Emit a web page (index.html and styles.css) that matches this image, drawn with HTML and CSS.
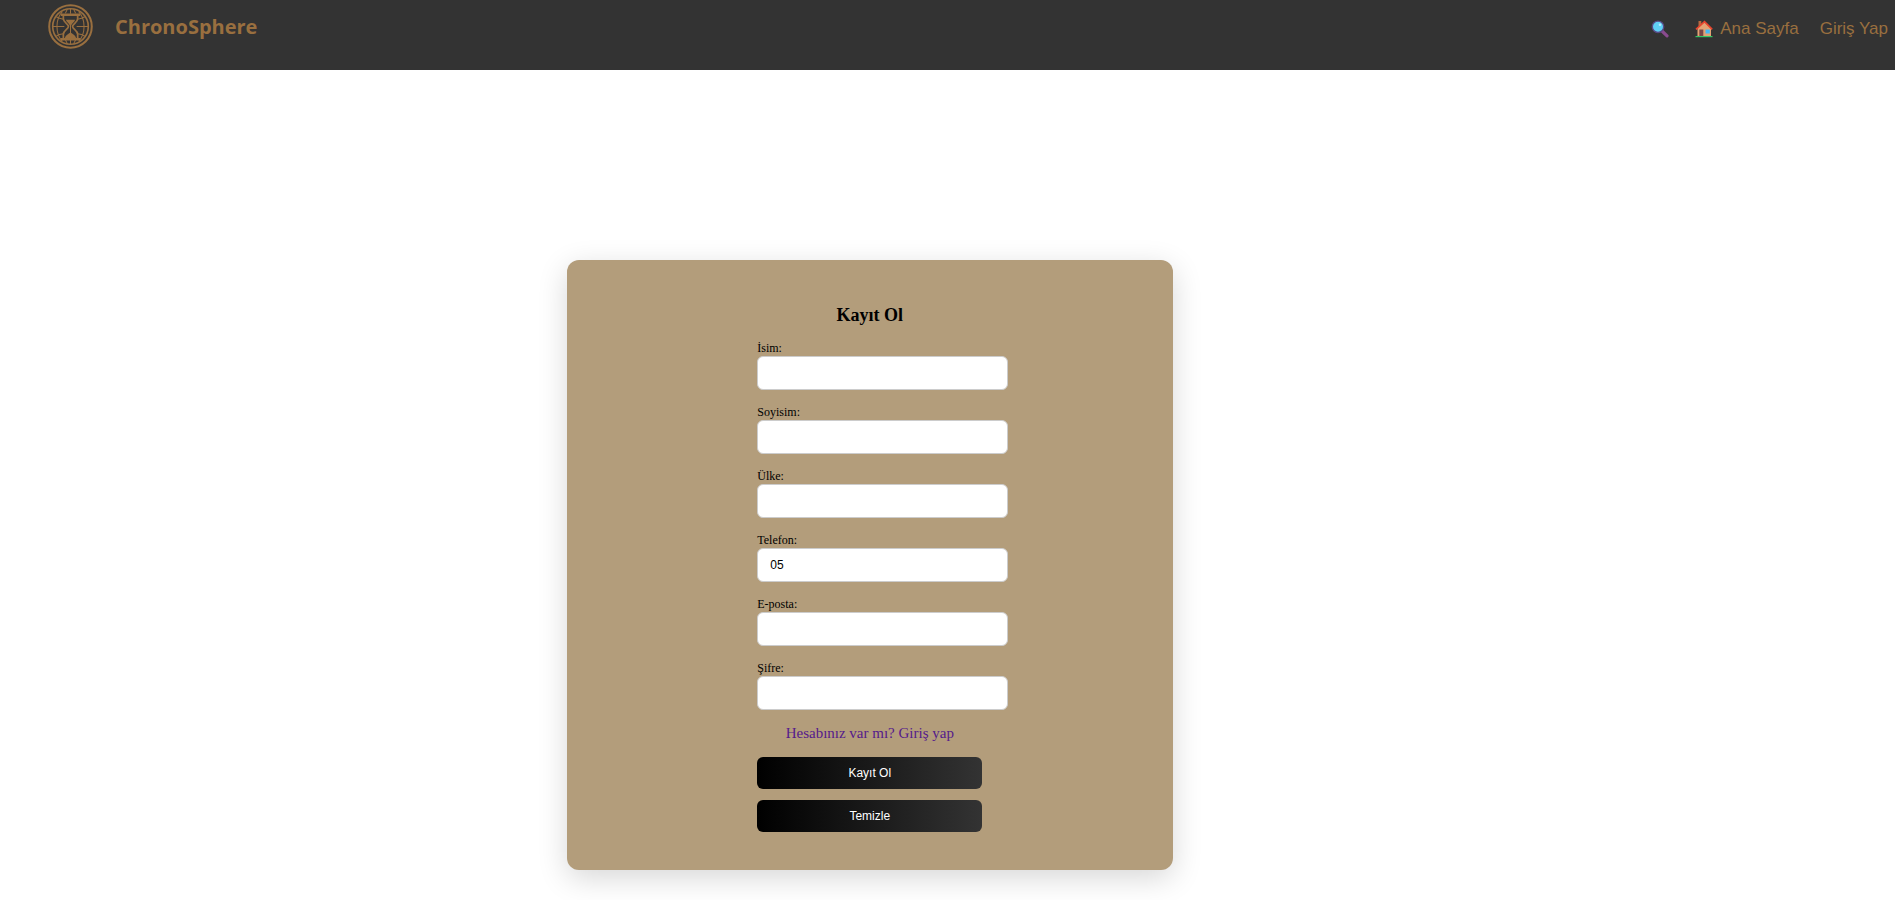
FILE: index.html
```html
<!DOCTYPE html>
<html lang="tr">
<head>
<meta charset="utf-8">
<meta name="viewport" content="width=device-width, initial-scale=1">
<title>ChronoSphere - Kayıt Ol</title>
<link rel="stylesheet" href="styles.css">
</head>
<body>
<header class="navbar">
  <a class="brand" href="#">
    <svg class="brand-logo" viewBox="0 0 44 44" fill="none" stroke="currentColor" aria-hidden="true">
      <circle cx="22" cy="22" r="20.800" stroke-width="2"/>
      <circle cx="22" cy="22" r="17.400" stroke-width="1.600"/>
      <path d="M4.500 22H16M28 22h11.500M8 12.500q3 1.800 7 2.300M36 12.500q-3 1.800-7 2.300M8 31.500q3-1.800 7-2.300M36 31.500q-3-1.800-7-2.300M14 7.500C7 15 7 29 14 36.500M30 7.500c7 7.500 7 21.500 0 29M22 4.500v5M22 35v4.500M17 9l2-4M27 9l-2-4M17 35l2 4M27 35l-2 4"/>
      <path d="M12.500 10.500h19M12.500 34.500h19" stroke-width="2.400"/>
      <path d="M15 11v3.500c0 3.500 5 5 5 7.500s-5 4-5 7.500V34M29 11v3.500c0 3.500-5 5-5 7.500s5 4 5 7.500V34" stroke-width="1.700"/>
      <path d="M17.500 15.500h9c-.5 2.500-3.500 3.500-4 6h-1c-.5-2.500-3.500-3.500-4-6zM16.500 33.500c.5-3.500 3.500-4 5.500-6 2 2 5 2.500 5.500 6z" fill="currentColor" stroke="none"/>
      <path d="M22 20v9"/>
    </svg>
    <span class="brand-name">ChronoSphere</span>
  </a>
  <nav class="nav-links">
    <a class="nav-link" href="#" aria-label="Ara">
      <svg class="nav-icon" viewBox="0 0 18 18" aria-hidden="true">
        <path d="M11 11l5 4.800" stroke="#8a4b8f" stroke-width="3.200" stroke-linecap="round"/>
        <circle cx="7" cy="6.800" r="5.700" fill="#5fd0f5" stroke="#594a86" stroke-width="1.400"/>
        <circle cx="9" cy="4.800" r="1.300" fill="#b5ecff"/>
      </svg>
    </a>
    <a class="nav-link" href="#">
      <svg class="nav-icon" viewBox="0 0 18 18" aria-hidden="true">
        <path d="M3.500 1h2.800v5H3.500z" fill="#b9683f"/>
        <path d="M2.500 8L9.500 2l6.500 6v8H2.500z" fill="#e3a374"/>
        <path d="M1 9.300L9.500 1.700l7.700 7.600" fill="none" stroke="#e8452f" stroke-width="1.700"/>
        <path d="M4.300 9.500h4v6.500h-4z" fill="#7a4545"/>
        <path d="M10.500 9.500h4.300v4h-4.300z" fill="#45b8f5"/>
        <path d="M.5 16h17v1.200H.5z" fill="#35c465"/>
      </svg>
      <span>Ana Sayfa</span>
    </a>
    <a class="nav-link" href="#">Giriş Yap</a>
  </nav>
</header>
<main>
  <section class="card">
    <form class="signup">
      <h1 class="title">Kayıt Ol</h1>
      <div class="field"><label for="isim">İsim:</label><input id="isim" type="text"></div>
      <div class="field"><label for="soyisim">Soyisim:</label><input id="soyisim" type="text"></div>
      <div class="field"><label for="ulke">Ülke:</label><input id="ulke" type="text"></div>
      <div class="field"><label for="telefon">Telefon:</label><input id="telefon" type="tel" value="05"></div>
      <div class="field"><label for="eposta">E-posta:</label><input id="eposta" type="email"></div>
      <div class="field"><label for="sifre">Şifre:</label><input id="sifre" type="password"></div>
      <a class="login-link" href="#">Hesabınız var mı? Giriş yap</a>
      <div class="actions">
        <button class="btn" type="submit">Kayıt Ol</button>
        <button class="btn" type="reset">Temizle</button>
      </div>
    </form>
  </section>
</main>
</body>
</html>
```
FILE: styles.css
```css
* { box-sizing: border-box; }

body {
  margin: 0;
  background: #fff;
  color: #000;
  font-family: "Liberation Serif", serif;
}

.navbar {
  display: flex;
  justify-content: space-between;
  align-items: flex-start;
  min-height: 70px;
  padding: 4px 7px 0 48px;
  background: #333;
}

.brand {
  display: flex;
  align-items: center;
  gap: 22px;
  color: #996f3f;
  text-decoration: none;
}

.brand-logo { width: 45px; height: 45px; }

.brand-name {
  font: bold 20px/28px "Open Sans", "Noto Sans", sans-serif;
}

.nav-links {
  display: flex;
  gap: 21px;
  padding-top: 15px;
}

.nav-link {
  display: flex;
  align-items: center;
  gap: 7px;
  color: #996f3f;
  font: 17px/20px "Liberation Sans", sans-serif;
  text-decoration: none;
}

.nav-link:first-child { margin-right: 5px; }

.nav-icon { width: 18px; height: 18px; }

.card {
  width: 32%;
  margin: 190px 0 30px 29.9%;
  padding: 44px 20px 38px;
  border-radius: 12px;
  background: #b39d7b;
  box-shadow: 0 8px 30px rgba(0, 0, 0, 0.16);
}

.signup {
  display: flex;
  flex-direction: column;
  gap: 15px;
  width: 225px;
  margin: 0 auto;
}

.title {
  margin: 0;
  font-size: 18px;
  line-height: 22px;
  text-align: center;
}

.field {
  display: flex;
  flex-direction: column;
  gap: 1px;
  width: 251px;
  font-size: 12px;
  line-height: 14px;
}

.field input {
  height: 34px;
  padding: 0 12px;
  border: 1px solid #ccc;
  border-radius: 6px;
  background: #fff;
  font: 12px "Liberation Sans", sans-serif;
}

.login-link {
  align-self: center;
  color: #551a8b;
  font-size: 15px;
  line-height: 17px;
  text-decoration: none;
  white-space: nowrap;
}

.actions {
  display: flex;
  flex-direction: column;
  gap: 11px;
}

.btn {
  height: 32px;
  border: 0;
  border-radius: 6px;
  background: linear-gradient(to right, #000, #333);
  color: #fff;
  font: 12px "Liberation Sans", sans-serif;
}
```
